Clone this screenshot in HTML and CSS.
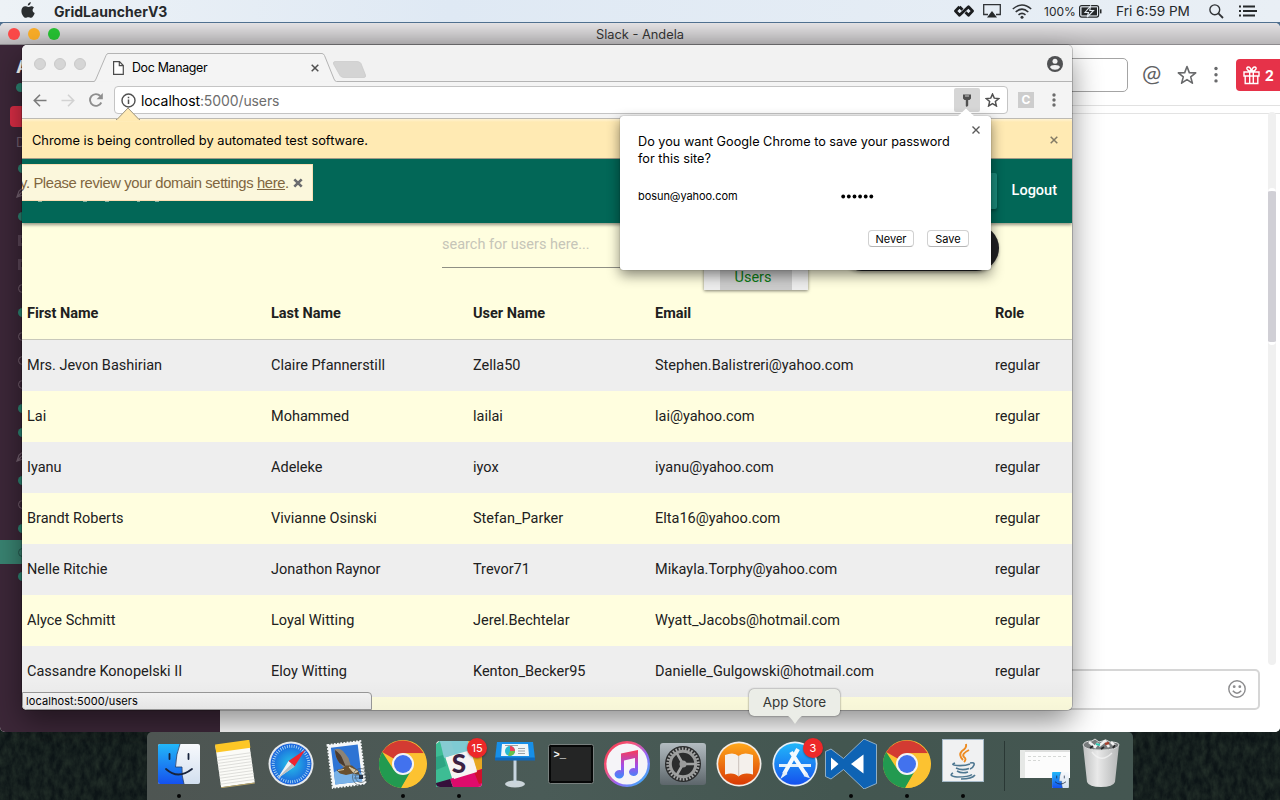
FILE: index.html
```html
<!DOCTYPE html>
<html lang="en">
<head>
<meta charset="utf-8">
<title>Doc Manager</title>
<link rel="stylesheet" href="styles.css">
</head>
<body>
<svg class="defs" width="0" height="0" aria-hidden="true">
  <defs>
    <linearGradient id="gBlue" x1="0" y1="0" x2="0" y2="1"><stop offset="0" stop-color="#22b7f8"/><stop offset="1" stop-color="#1551ee"/></linearGradient>
    <linearGradient id="gPale" x1="0" y1="0" x2="0" y2="1"><stop offset="0" stop-color="#f7f9fc"/><stop offset="1" stop-color="#d2dfef"/></linearGradient>
    <linearGradient id="gOrange" x1="0" y1="0" x2="0" y2="1"><stop offset="0" stop-color="#ffa81c"/><stop offset="1" stop-color="#d93a05"/></linearGradient>
    <linearGradient id="gNote" x1="0" y1="0" x2="0" y2="1"><stop offset="0" stop-color="#f83b55"/><stop offset=".55" stop-color="#a34be8"/><stop offset="1" stop-color="#3a8dfa"/></linearGradient>
    <linearGradient id="gRing" x1="0" y1="0" x2="1" y2="1"><stop offset="0" stop-color="#f2384f"/><stop offset=".35" stop-color="#f4557f"/><stop offset=".6" stop-color="#9a63f5"/><stop offset="1" stop-color="#23c0f8"/></linearGradient>
    <linearGradient id="gMetal" x1="0" y1="0" x2="0" y2="1"><stop offset="0" stop-color="#b3bcc1"/><stop offset="1" stop-color="#5d666b"/></linearGradient>
    <radialGradient id="gSafari"><stop offset="0" stop-color="#27c4e8"/><stop offset="1" stop-color="#1a62dc"/></radialGradient>
    <linearGradient id="gTrash" x1="0" y1="0" x2="1" y2="0"><stop offset="0" stop-color="#bfc1c1"/><stop offset=".4" stop-color="#e9e9e9"/><stop offset="1" stop-color="#b4b6b6"/></linearGradient>
    <symbol id="chrome" viewBox="0 0 48 48">
      <circle cx="24" cy="24" r="24" fill="#fcc231"/>
      <path d="M24 24 3.200 12A24 24 0 0 1 44.800 13.300H24z" fill="#d33b32"/>
      <path d="M3.200 12A24 24 0 0 0 22 48L33 29 24 24 14.500 29.500z" fill="#229a50"/>
      <path d="M24 13.300H45A24 24 0 0 1 22.500 48L33.500 29z" fill="#fcc231"/>
      <circle cx="24" cy="24" r="11" fill="#f4f4f4"/><circle cx="24" cy="24" r="9" fill="#4272ee"/>
    </symbol>
    <symbol id="finder" viewBox="0 0 42 40">
      <rect width="42" height="40" rx="2" fill="url(#gPale)"/>
      <path d="M2 0H22Q18 10 17.500 23H24Q23.500 32 26 40H2Q0 40 0 38V2Q0 0 2 0z" fill="url(#gBlue)"/>
      <path d="M22 0Q18 10 17.500 23H24Q23.500 32 26 40" fill="none" stroke="#223b66" stroke-width=".8"/>
      <path d="M8 25Q20 36 34 25M11.500 10V15M30.500 10V15" fill="none" stroke="#17233c" stroke-width="1.800" stroke-linecap="round"/>
    </symbol>
    <symbol id="pencil" viewBox="0 0 12 14"><path d="M1 12 3 6 8 2 11 5 7 10zM1 12 6 7" fill="none" stroke="currentColor" stroke-width="1.200"/></symbol>
  </defs>
</svg>

<svg class="wallpaper" width="1280" height="800">
  <filter id="forest" x="0" y="0" width="100%" height="100%" color-interpolation-filters="sRGB">
    <feTurbulence type="fractalNoise" baseFrequency=".16 .09" numOctaves="4" seed="8"/>
    <feColorMatrix values="0 0 0 0 .15  0 0 0 0 .2  0 0 0 0 .17  1.200 .5 0 0 -.5"/>
  </filter>
  <rect width="1280" height="800" fill="#0c1416"/>
  <rect y="720" width="1280" height="80" filter="url(#forest)"/>
</svg>

<header class="menubar">
  <svg class="apple" width="14" height="17" viewBox="0 0 14 17"><path d="M9.800 0c.1 1.800-1.300 3.400-3 3.500C6.600 1.800 8.200.2 9.800 0zM12.900 5.700C11 6.900 11.200 9.900 13.700 10.900 13 13 11.500 15.800 9.900 15.800c-1 0-1.400-.6-2.600-.6s-1.700.6-2.600.6C2.700 15.800.4 12 .4 8.900.4 6 2.200 4.300 4.200 4.300c1.200 0 2.100.7 3 .7.800 0 1.900-.8 3.300-.8 1 0 1.900.5 2.400 1.500z" fill="#2b2e30"/></svg>
  <strong class="appname">GridLauncherV3</strong>
  <div class="status">
    <svg width="20" height="12" viewBox="0 0 20 12"><path d="M5.500 1.800 1.500 6 5.500 10.200 14.500 1.800 18.500 6 14.500 10.200 11.500 7.300M5.500 1.800 8.500 4.700" fill="none" stroke="#1b1d1f" stroke-width="2.800" stroke-linejoin="round"/></svg>
    <svg class="airplay" width="18" height="14" viewBox="0 0 18 14"><path d="M5 10.500H.7V.7H17.300V10.500H13" fill="none" stroke="#303336" stroke-width="1.300"/><path d="M9 7 14 13.500H4z" fill="#26292b"/></svg>
    <svg class="wifi" width="20" height="15" viewBox="0 0 20 15"><path d="M.8 5Q10-3 19.200 5M3.700 8Q10 2.300 16.300 8M6.500 10.900Q10 7.800 13.500 10.900" fill="none" stroke="#303336" stroke-width="1.500"/><circle cx="10" cy="13.200" r="1.500" fill="#303336"/></svg>
    <span class="pct">100%</span>
    <svg class="battery" width="23" height="13" viewBox="0 0 23 13"><rect x=".6" y=".6" width="19" height="11.500" rx="2" fill="none" stroke="#26292b" stroke-width="1.200"/><rect x="2.500" y="2.400" width="15.500" height="8" fill="#26292b"/><path d="M11.500 1 6 7.500H9.500L8.200 12 14.500 5.500H10.800z" fill="#26292b" stroke="#e6edf4" stroke-width="1.100"/><path d="M21.700 4.300V8.400" stroke="#26292b" stroke-width="1.600"/></svg>
    <span class="clock">Fri 6:59 PM</span>
    <svg class="spot" width="15" height="15" viewBox="0 0 15 15"><circle cx="5.800" cy="5.800" r="4.900" fill="none" stroke="#303336" stroke-width="1.400"/><path d="M9.400 9.400 14 14" stroke="#303336" stroke-width="1.800"/></svg>
    <svg class="list" width="18" height="12" viewBox="0 0 18 12"><path d="M0 1.500H2M0 6H2M0 10.500H2M4 1.500H16M4 6H18M4 10.500H16" stroke="#26292b" stroke-width="1.900"/></svg>
  </div>
</header>

<section class="slack">
  <div class="slack-title"><i class="light red"></i><i class="light amber"></i><i class="light green"></i><span>Slack - Andela</span></div>
  <div class="slack-body">
    <aside class="side">
      <b class="team">A</b>
      <i class="dot first"></i>
      <i class="alert"></i>
      <span class="dm">D</span>
      <ul class="people">
        <li><i class="dot"></i></li>
        <li><svg width="12" height="14"><use href="#pencil"/></svg></li>
        <li><i class="dot"></i></li>
        <li><i class="box"></i></li>
        <li><i class="box"></i></li>
        <li><i class="ring"></i></li>
        <li><i class="dot"></i></li>
        <li><i class="ring"></i></li>
        <li><i class="ring"></i></li>
        <li><i class="ring"></i></li>
        <li><i class="dot"></i></li>
        <li><i class="dot"></i></li>
        <li><svg width="12" height="14"><use href="#pencil"/></svg></li>
        <li><i class="dot"></i></li>
        <li><i class="ring"></i></li>
        <li><i class="dot"></i></li>
        <li class="on"><i class="ring"></i></li>
        <li><i class="dot"></i></li>
      </ul>
    </aside>
    <main class="chat">
      <div class="chat-head">
        <div class="chat-search"></div>
        <span class="at">@</span>
        <svg class="star" width="20" height="20" viewBox="0 0 20 20"><path d="M10 1.500 12.300 7.600 18.700 7.900 13.700 11.900 15.400 18.200 10 14.600 4.600 18.200 6.300 11.900 1.300 7.900 7.700 7.600z" fill="none" stroke="#696a6c" stroke-width="1.600" stroke-linejoin="round"/></svg>
        <svg class="more" width="4" height="18" viewBox="0 0 4 18"><g fill="#696a6c"><circle cx="2" cy="2.500" r="1.700"/><circle cx="2" cy="8.700" r="1.700"/><circle cx="2" cy="14.900" r="1.700"/></g></svg>
        <div class="gift">
          <svg width="17" height="19" viewBox="0 0 17 19"><path d="M1 6H16V10H1zM2.200 10V17.500H14.800V10M6.700 6V17.500M10.300 6V17.500M8.500 5.500C3 5 3 1 5.200 1S8 3 8.500 5.500C9 3 9.700 1 11.800 1S14 5 8.500 5.500z" fill="none" stroke="#fff" stroke-width="1.400"/></svg>
          <b>2</b>
        </div>
      </div>
      <div class="messages"><div class="track"><i class="thumb"></i></div></div>
      <div class="composer">
        <svg width="18" height="18" viewBox="0 0 18 18"><circle cx="9" cy="9" r="8.200" fill="none" stroke="#8c8c8e" stroke-width="1.400"/><circle cx="6.200" cy="6.700" r="1.400" fill="#8c8c8e"/><circle cx="11.800" cy="6.700" r="1.400" fill="#8c8c8e"/><path d="M4.800 10.800Q9 15.500 13.200 10.800" fill="none" stroke="#8c8c8e" stroke-width="1.500"/></svg>
      </div>
    </main>
  </div>
</section>

<section class="browser">
  <div class="tabstrip">
    <svg class="tabshape" width="1050" height="37" viewBox="0 0 1050 37"><path d="M0 36.500H72Q73 36.500 74 34L84 10.500Q85 8.500 86 8.500H300Q301.500 8.500 302.500 10.500L312 34Q313 36.500 314.500 36.500H1050" fill="#f4f4f4" stroke="#b4b4b4"/><path d="M313 16.500H335Q338 16.500 339 18.500L343.500 30Q344 32.500 342 32.500H322Q319 32.500 318 30.500L311.500 19Q311 16.500 313 16.500z" fill="#d4d4d4" stroke="#c9c9c9" stroke-width=".7"/></svg>
    <div class="lights"><i></i><i></i><i></i></div>
    <div class="tab">
      <svg width="11" height="14" viewBox="0 0 11 14"><path d="M.6.6H6.500L10.300 4.500V13.300H.6zM6.300.8V4.700H10.200" fill="#fff" stroke="#4b4b4b" stroke-width="1.200"/></svg>
      <span class="tabname">Doc Manager</span>
      <svg class="x" width="8" height="8" viewBox="0 0 8 8"><path d="M.7.7 7.300 7.300M7.300.7.7 7.300" stroke="#4f4f4f" stroke-width="1.500"/></svg>
    </div>
    <svg class="profile" width="16" height="16" viewBox="0 0 16 16"><circle cx="8" cy="8" r="8" fill="#505153"/><circle cx="8" cy="5.200" r="2.500" fill="#f2f2f2"/><path d="M3 11.300Q3.500 9 8 9T13 11.300Q11.500 13.800 8 13.800T3 11.300z" fill="#f2f2f2"/></svg>
  </div>
  <div class="toolbar">
    <svg width="14" height="13" viewBox="0 0 14 13"><path d="M13.500 6.500H1.500M7 .8 1.300 6.500 7 12.200" fill="none" stroke="#7b7b7b" stroke-width="1.600"/></svg>
    <svg class="fwd" width="14" height="13" viewBox="0 0 14 13"><path d="M.5 6.500H12.500M7 .8 12.700 6.500 7 12.200" fill="none" stroke="#d2d2d2" stroke-width="1.600"/></svg>
    <svg class="reload" width="15" height="14" viewBox="0 0 15 14"><path d="M12.300 9.500A5.900 5.900 0 1 1 11.300 3" fill="none" stroke="#8e8e8e" stroke-width="1.900"/><path d="M13.800 0V6.200H7.600z" fill="#8e8e8e"/></svg>
    <div class="omnibox">
      <svg width="15" height="15" viewBox="0 0 15 15"><circle cx="7.500" cy="7.500" r="6.500" fill="none" stroke="#505050" stroke-width="1.400"/><path d="M7.500 6.500V11M7.500 3.800V5.300" stroke="#505050" stroke-width="1.500"/></svg>
      <span class="url">localhost<em>:5000/users</em></span>
      <span class="key"><svg width="10" height="13" viewBox="0 0 10 13"><path d="M1 .5H9V4.500L7.500 6H6.200V11.500L4.800 13 3.800 12V6H2.500L1 4.500z" fill="#505050"/><path d="M3 2H7" stroke="#ccc"/></svg></span>
      <svg class="fav" width="15" height="14" viewBox="0 0 20 19"><path d="M10 1.500 12.400 7 18.500 7.600 13.900 11.600 15.300 17.600 10 14.400 4.700 17.600 6.100 11.600 1.500 7.600 7.600 7z" fill="none" stroke="#505050" stroke-width="2"/></svg>
    </div>
    <b class="ext">C</b>
    <svg class="kebab" width="4" height="14" viewBox="0 0 4 14"><g fill="#6c6c6c"><circle cx="2" cy="2" r="1.700"/><circle cx="2" cy="7" r="1.700"/><circle cx="2" cy="12" r="1.700"/></g></svg>
  </div>
  <div class="infobar">
    <svg class="notch" width="24" height="14" viewBox="0 0 24 14"><path d="M0 12.800 12 1 24 12.800V14H0z" fill="#ffeab3"/><path d="M0 12.500H1L12 1 23 12.500H24" fill="none" stroke="#9c9583"/></svg>
    <span>Chrome is being controlled by automated test software.</span>
    <svg width="8" height="8" viewBox="0 0 8 8"><path d="M.7.7 7.300 7.300M7.300.7.7 7.300" stroke="#827a65" stroke-width="1.500"/></svg>
  </div>
  <div class="page">
    <nav class="nav">
      <i class="navbtn"></i>
      <a class="logout">Logout</a>
      <svg class="specks" width="150" height="3" viewBox="0 0 150 3"><path d="M16 .5H20M61 .5H65M83 .5H87M115 .5H118M133 .5H137" stroke="#7fb3a5"/></svg>
    </nav>
    <div class="notice"><span>y. Please review your domain settings <u>here</u>.</span><svg width="10" height="10" viewBox="0 0 10 10"><path d="M1.300 1.300 8.700 8.700M8.700 1.300 1.300 8.700" stroke="#6b6c6e" stroke-width="2.600"/></svg></div>
    <div class="tools">
      <div class="search">search for users here...</div>
      <div class="usertab"><span>Users</span></div>
      <i class="pill"></i>
    </div>
    <div class="table">
      <div class="row head"><span>First Name</span><span>Last Name</span><span>User Name</span><span>Email</span><span>Role</span></div>
      <div class="row"><span>Mrs. Jevon Bashirian</span><span>Claire Pfannerstill</span><span>Zella50</span><span>Stephen.Balistreri@yahoo.com</span><span>regular</span></div>
      <div class="row"><span>Lai</span><span>Mohammed</span><span>lailai</span><span>lai@yahoo.com</span><span>regular</span></div>
      <div class="row"><span>Iyanu</span><span>Adeleke</span><span>iyox</span><span>iyanu@yahoo.com</span><span>regular</span></div>
      <div class="row"><span>Brandt Roberts</span><span>Vivianne Osinski</span><span>Stefan_Parker</span><span>Elta16@yahoo.com</span><span>regular</span></div>
      <div class="row"><span>Nelle Ritchie</span><span>Jonathon Raynor</span><span>Trevor71</span><span>Mikayla.Torphy@yahoo.com</span><span>regular</span></div>
      <div class="row"><span>Alyce Schmitt</span><span>Loyal Witting</span><span>Jerel.Bechtelar</span><span>Wyatt_Jacobs@hotmail.com</span><span>regular</span></div>
      <div class="row"><span>Cassandre Konopelski II</span><span>Eloy Witting</span><span>Kenton_Becker95</span><span>Danielle_Gulgowski@hotmail.com</span><span>regular</span></div>
    </div>
    <div class="shade"></div>
    <div class="statusbar">localhost:5000/users</div>
  </div>
</section>

<section class="dialog">
  <svg class="tip" width="18" height="9" viewBox="0 0 18 9"><path d="M0 9 9 .5 18 9z" fill="#fff"/></svg>
  <svg class="close" width="8" height="8" viewBox="0 0 8 8"><path d="M.5.5 7.500 7.500M7.500.5.500 7.500" stroke="#5a5a5a" stroke-width="1.400"/></svg>
  <p>Do you want Google Chrome to save your password<br>for this site?</p>
  <div class="cred"><span>bosun@yahoo.com</span><svg width="33" height="5" viewBox="0 0 33 5"><g fill="#000"><circle cx="2.200" cy="2.500" r="1.900"/><circle cx="7.800" cy="2.500" r="1.900"/><circle cx="13.500" cy="2.500" r="1.900"/><circle cx="19.100" cy="2.500" r="1.900"/><circle cx="24.700" cy="2.500" r="1.900"/><circle cx="30.300" cy="2.500" r="1.900"/></g></svg></div>
  <div class="actions"><span class="btn never">Never</span><span class="btn save">Save</span></div>
</section>

<footer class="dock">
  <div class="slot run"><svg width="42" height="40"><use href="#finder"/></svg></div>
  <div class="slot"><svg width="42" height="48" viewBox="0 0 42 48"><g transform="rotate(-8 21 24)"><rect x="4" y="3" width="34" height="42" fill="#fbfbf7"/><path d="M4 15H38M4 18H38M4 21H38M4 24H38M4 27H38M4 30H38M4 33H38M4 36H38M4 39H38M4 42H38" stroke="#d8d8d4" stroke-width=".8"/><rect x="4" y="2" width="34.500" height="8" fill="#fdc726"/><path d="M4 45.500H38" stroke="#bda86a"/></g></svg></div>
  <div class="slot"><svg width="46" height="46" viewBox="0 0 46 46"><circle cx="23" cy="23" r="22.500" fill="#e6e9eb"/><circle cx="23" cy="23" r="20.500" fill="url(#gSafari)"/><circle cx="23" cy="23" r="17.800" fill="none" stroke="#b6def7" stroke-width="3" stroke-dasharray=".8 1.530"/><path d="M37.500 8.500 26.500 25.500 20.500 20z" fill="#ee2430"/><path d="M9.500 37.500 20.500 20 26.500 25.500z" fill="#f1f1f1"/><path d="M9.500 37.500 23.500 22.800 26.500 25.500z" fill="#b9bfc2"/></svg></div>
  <div class="slot"><svg width="46" height="50" viewBox="0 0 46 50"><g transform="rotate(-7 22 25)"><rect x="6" y="4" width="33" height="43" fill="#f5f7f8" stroke="#f5f7f8" stroke-width="2" stroke-dasharray="1.800 1.400"/><rect x="9" y="7" width="27" height="37" fill="#2e74d4"/><path d="M9 32Q20 25 36 36V44H9z" fill="#79b2e8"/></g><path d="M10.500 10.500Q15 8.500 19 12L24.500 19 27 27.500 21 30 15.500 24Q11 18 10.500 10.500z" fill="#8d8273"/><path d="M11 11Q17 15 19 21L22 28 15.500 24Q11 18 11 11z" fill="#4b3b2f"/><path d="M12.500 31Q19 30 22 26.500L28 26.500 34 31.500 36 36 29 34.500 22 36 16 34.500z" fill="#69502f"/><path d="M25 28 34 32.500 30 34zM14 31.500 20 30.500" fill="#d6c6a4" stroke="#d6c6a4"/><g fill="none" stroke="#3b4850" stroke-width="1" opacity=".6"><circle cx="37" cy="38" r="8.500"/><circle cx="37" cy="38" r="5.500"/><path d="M30 36H45M30 39H45"/></g><rect x="35" y="36" width="4" height="4" fill="#26354b"/></svg></div>
  <div class="slot run"><svg width="48" height="48"><use href="#chrome"/></svg></div>
  <div class="slot run"><svg width="46" height="46" viewBox="0 0 46 46"><rect width="46" height="46" rx="4" fill="#f5f3f1"/><path d="M4 0H32L35 9 7 17 2 2z" fill="#7fcbd3"/><path d="M0 3 4 0 17 40 0 46z" fill="#3dbd94"/><path d="M4 0H15L19 13 8 17z" fill="#86cbd2"/><path d="M0 16 7 14 10 25 0 29z" fill="#2da583"/><path d="M32 0H42Q46 0 46 4V28L41 30z" fill="#e8a820"/><path d="M14 38 46 28V42Q46 46 42 46H17z" fill="#df0b6c"/><path d="M38 31 46 28V42L43 43z" fill="#cf102c"/><path d="M0 42 14 38 17 46H4Q0 46 0 42z" fill="#36103b"/><path d="M10 17 34 10 41 31 18 38z" fill="#f7f4f3"/><text x="23" y="32" class="slack-s">S</text></svg><b class="badge slackb">15</b></div>
  <div class="slot"><svg width="42" height="48" viewBox="0 0 42 48"><ellipse cx="21" cy="44" rx="10" ry="3.500" fill="#cbd5da"/><path d="M19.500 18H22.500V43H19.500z" fill="#c7d5df"/><path d="M3 2H39L41 19H1z" fill="#178fe8"/><path d="M1 17.500H41V20.500H1z" fill="#0f68bb"/><path d="M8 4H34L35 16H7z" fill="#f0f6f8"/><circle cx="16" cy="11" r="5" fill="#28b9cf"/><path d="M16 11V6A5 5 0 0 1 21 11z" fill="#ed415b"/><path d="M16 11H21A5 5 0 0 1 14 15.500z" fill="#6cc047"/><path d="M11 5.500H24M24 8.500H31M24 11H31M24 13.500H31" stroke="#9aa0a5"/></svg></div>
  <div class="slot"><svg width="46" height="40" viewBox="0 0 46 40"><rect x=".5" y=".5" width="45" height="39" rx="2" fill="#060707" stroke="#78807e"/><rect x="3" y="3" width="40" height="34" fill="#242525"/><text x="5.500" y="14" class="prompt">&gt;_</text></svg></div>
  <div class="slot"><svg width="46" height="46" viewBox="0 0 46 46"><circle cx="23" cy="23" r="21.800" fill="#f5f4f8" stroke="url(#gRing)" stroke-width="2.400"/><path d="M17 12.500 34 9V30.500A4.500 4 0 1 1 31 27.200V17L20 19.500V33A4.700 4.200 0 1 1 17 29.300z" fill="url(#gNote)"/></svg></div>
  <div class="slot"><svg width="46" height="42" viewBox="0 0 46 42"><rect width="46" height="42" rx="3" fill="url(#gMetal)"/><circle cx="23" cy="21" r="18" fill="#2b2c2d"/><circle cx="23" cy="21" r="15.200" fill="none" stroke="#a6a7a7" stroke-width="3" stroke-dasharray="1.700 1.480"/><circle cx="23" cy="21" r="12.700" fill="none" stroke="#9c9d9d" stroke-width="3"/><path d="M23 21H36M23 21 16.500 9.700M23 21 16.500 32.300" stroke="#a2a3a3" stroke-width="2.600"/><circle cx="23" cy="21" r="3.500" fill="#9a9b9b"/></svg></div>
  <div class="slot"><svg width="46" height="46" viewBox="0 0 46 46"><circle cx="23" cy="23" r="22.500" fill="#f0ebe7"/><circle cx="23" cy="23" r="20.800" fill="url(#gOrange)"/><path d="M9 14Q18 10.500 22.500 15 27.500 10.500 37 14V33.500Q27.500 31 22.500 35.500 18 31 9 33.500z" fill="#f4f0ec"/><path d="M22.700 15V35" stroke="#c9c1bb"/></svg></div>
  <div class="slot"><svg width="46" height="46" viewBox="0 0 46 46"><circle cx="23" cy="23" r="22.500" fill="#e8eff6"/><circle cx="23" cy="23" r="20.800" fill="url(#gBlue)"/><path d="M7 24.500H39" stroke="#e3f1fb" stroke-width="3"/><path d="M26 8 12 33M19 11 34 34" stroke="#f4fafe" stroke-width="4"/><path d="M12.500 30 10 36 15 32.500M32 34.500 36.500 36 34 31" fill="#e6eff7" stroke="#e6eff7" stroke-width="1.500"/></svg><b class="badge">3</b><span class="tooltip">App Store<svg width="18" height="10" viewBox="0 0 18 10"><path d="M0 0H18Q14 1 9 9 4 1 0 0z" fill="#ebede7"/></svg></span></div>
  <div class="slot run"><svg width="52" height="50" viewBox="0 0 52 50"><path d="M39 0 51.500 5.500V44.500L39 50 18.500 30.500 6 40 .5 37.500V12.500L6 10 18.500 19.500z" fill="#0e63b4" stroke="#a9c3d6" stroke-width=".8"/><path d="M6 18.500V31.500L13.500 25zM38.500 15.500V34.500L26 25z" fill="#fff"/></svg></div>
  <div class="slot run"><svg width="48" height="48"><use href="#chrome"/></svg></div>
  <div class="slot run java"><svg width="42" height="43" viewBox="0 0 42 43"><rect x=".5" y=".5" width="41" height="42" fill="#f0f1f2" stroke="#a6bac8"/><path d="M24 5Q25 9 20 12 16 16 21 21M27 11Q19 15 22 18 25 20 22 23" fill="none" stroke="#ee8b20" stroke-width="1.900"/><path d="M13 24Q8 26 15 26.500 23 27 28 25M14 29Q20 32 27 29.500M15 32Q20 35 26 33M28 24Q33 23 32 26 31 29 28 30M11 34Q6 37 15 38 27 38 30 35.500M33 36Q30 40 19 40" fill="none" stroke="#4e7791" stroke-width="1.600"/></svg></div>
  <i class="sep"></i>
  <div class="slot mini"><svg width="50" height="38" viewBox="0 0 50 38"><rect width="50" height="28" fill="#fcfcfc"/><rect width="50" height="2" fill="#dedfde"/><rect width="5" height="28" fill="#e6e8e6"/><path d="M8 6.500H47M8 10.500H20" stroke="#d6d8d6" stroke-dasharray="3 2"/><svg x="32" y="22" width="17" height="16"><use href="#finder"/></svg></svg></div>
  <div class="slot trash"><svg width="40" height="50" viewBox="0 0 40 50"><path d="M2 7Q20 14 38 7L34 44Q32 49 20 49T6 44z" fill="url(#gTrash)"/><path d="M2 7Q3 3 11 3L14 1 18 4 25 2 29 4Q38 4 38 7 37 12 20 12T2 7z" fill="#777b7c" stroke="#d8dada"/><path d="M8 4 14 9 17 5M18 8 24 3 28 9M30 4 34 8" stroke="#f2f2f2" stroke-width="2.500" fill="none"/><path d="M15 6 19 7" stroke="#2cc7b0" stroke-width="2"/><path d="M24 6 28 5" stroke="#a4402e" stroke-width="2.500"/><path d="M9 10 12 8M20 11 23 9M32 10 34 7" stroke="#252728" stroke-width="2"/><path d="M11 14Q20 26 31 15" fill="none" stroke="#f5f5f5" stroke-width="1.500" opacity=".7"/></svg></div>
</footer>
</body>
</html>
```
FILE: styles.css
```css
* { box-sizing: border-box; }
html, body { margin: 0; width: 1280px; height: 800px; overflow: hidden; }
body { position: relative; font-family: Inter, "Liberation Sans", sans-serif; font-size: 13px; background: #10191a; color: #000; }
svg { display: block; flex: none; }
i, em { font-style: normal; }
i { display: block; flex: none; }
span { white-space: nowrap; }
.defs, .wallpaper { position: absolute; left: 0; top: 0; }

/* System menu bar */
.menubar { position: absolute; left: 0; top: 0; width: 1280px; height: 22px; display: flex; align-items: center; padding-left: 21px; background: linear-gradient(90deg, #edf2f6, #dfe9f4 35%, #e9eff5); color: #26292b; }
.menubar::after { content: ""; position: absolute; left: 0; top: 22px; width: 100%; height: 10px; background: #50708f; }
.apple { margin-top: -2px; }
.appname { margin-left: 19px; font-size: 14px; font-weight: 700; letter-spacing: .04px; }
.status { margin-left: auto; height: 22px; display: flex; align-items: center; padding-right: 23px; }
.airplay { margin-left: 9px; }
.wifi { margin-left: 11px; }
.pct { margin-left: 12px; width: 35px; font-size: 12px; }
.clock { margin-left: 14px; width: 76px; font-size: 13.600px; }
.spot { margin-left: 17px; }
.list { margin-left: 15px; }

/* Chat window */
.slack { position: absolute; left: 0; top: 23px; width: 1280px; height: 709px; border-radius: 5px; overflow: hidden; background: #fff; }
.slack-title { height: 22px; display: flex; align-items: center; gap: 8px; padding-left: 8px; background: linear-gradient(#e3e1e3, #b9b7b9); border-bottom: 1px solid #8d8b8e; position: relative; }
.slack-title span { position: absolute; left: 0; top: 4px; width: 100%; text-align: center; color: #333; font-size: 12.800px; }
.light { width: 12px; height: 12px; border-radius: 50%; }
.red { background: #fb4948; } .amber { background: #f8ac27; } .green { background: #26bf32; }
.slack-body { display: flex; height: 687px; }
.side { width: 220px; background: #3c2738; overflow: hidden; color: #746170; }
.team { display: block; margin: 12px 0 0 16px; height: 20px; line-height: 20px; color: #fff; font-size: 18px; }
.dot { width: 9px; height: 9px; margin-left: 1px; border-radius: 50%; background: #2c8573; }
.dot.first { margin: 6px 0 0 16px; }
.alert { margin: 14px 0 0 10px; width: 180px; height: 21px; border-radius: 4px; background: #da2d45; }
.dm { display: block; margin: 8px 0 0 16px; height: 14px; line-height: 14px; }
.people { list-style: none; margin: 7px 0 0; padding: 0; }
.people li { height: 24px; padding-left: 17px; display: flex; align-items: center; }
.people li svg { margin-left: -1px; }
.ring { width: 9px; height: 9px; margin-left: 1px; border: 1px solid #756170; border-radius: 50%; }
.box { width: 10px; height: 11px; margin-left: 1px; border: 3px solid #5b4657; }
.people .on { background: #398371; }
.on .ring { border-color: #25584e; }
.chat { flex: 1; background: #fff; }
.chat-head { height: 61px; display: flex; align-items: center; border-bottom: 1px solid #e1e1e1; }
.chat-search { width: 908px; height: 34px; border: 1px solid #a4a4a4; border-radius: 5px; }
.at { margin: -5px 0 0 14px; width: 22px; color: #616264; font-family: Lato, sans-serif; font-size: 23px; line-height: 26px; }
.star { margin-left: 13px; }
.more { margin-left: 17px; }
.gift { margin-left: 18px; width: 44px; height: 32px; padding-left: 7px; display: flex; align-items: center; gap: 5px; border-radius: 4px 0 0 4px; background: #e63249; color: #fff; font: bold 15px Lato, sans-serif; }
.messages { height: 560px; margin-top: 7px; padding-right: 4px; border-top: 1px solid #e3e3e3; display: flex; justify-content: flex-end; }
.track { width: 8px; height: 553px; margin-top: -2px; padding-top: 76px; border-radius: 4px; background: #f0f0f0; }
.thumb { width: 8px; height: 157px; border: solid #fff; border-width: 3px 0; border-radius: 4px; background: #d0cfd5; }
.composer { width: 1040px; height: 41px; margin-top: -4px; padding: 0 12px 2px 0; display: flex; align-items: center; justify-content: flex-end; border: 2px solid #d6d6d6; border-radius: 5px; }

/* Browser window */
.browser { position: absolute; left: 22px; top: 45px; width: 1050px; height: 665px; border-radius: 5px; background: #f2f2f2; box-shadow: 0 0 0 1px rgba(0,0,0,.2), 0 12px 30px rgba(0,0,0,.45); }
.tabstrip { position: relative; height: 37px; display: flex; align-items: center; border-radius: 5px 5px 0 0; background: #f2f2f2; }
.tabshape { position: absolute; left: 0; top: 0; }
.lights { position: relative; display: flex; gap: 8px; padding-left: 12px; }
.lights i { width: 12px; height: 12px; border-radius: 50%; background: #d5d5d5; border: 1px solid #c9c9c9; }
.tab { position: relative; margin: 9px 0 0 27px; width: 206px; display: flex; align-items: center; }
.tabname { margin-left: 8px; font-size: 12.400px; line-height: 16px; letter-spacing: -.32px; }
.x { margin-left: auto; }
.profile { position: relative; margin: 1px 9px 0 auto; }
.toolbar { height: 37px; padding-left: 11px; display: flex; align-items: center; background: #f4f4f4; border-bottom: 1px solid #bdbab3; }
.fwd { margin-left: 14px; }
.reload { margin-left: 14px; }
.omnibox { margin-left: 10px; width: 894px; height: 28px; padding-left: 6px; display: flex; align-items: center; background: #fff; border: 1px solid #c4c4c4; border-radius: 4px; }
.url { margin-left: 5px; font-size: 14px; letter-spacing: -.1px; }
.url em { color: #6d6d6d; }
.key { margin-left: auto; width: 26px; height: 24px; display: flex; align-items: center; justify-content: center; background: #d6d6d6; border-radius: 2px; }
.fav { margin: 0 7px 0 5px; }
.ext { margin-left: 10px; width: 16px; height: 16px; background: #cdcdcd; color: #fff; text-align: center; font-size: 12px; line-height: 16px; }
.kebab { margin-left: 18px; }
.infobar { position: relative; height: 40px; padding: 3px 14px 0 10px; display: flex; align-items: center; justify-content: space-between; background: linear-gradient(#fff3d3, #ffeab3 3px); border-bottom: 1px solid #a19b87; font-size: 12.830px; }
.notch { position: absolute; left: 94px; top: -12px; }
.page { position: relative; z-index: 0; height: 551px; overflow: hidden; border-radius: 0 0 5px 5px; background: #fffedf; font: 15px Roboto, sans-serif; color: #202020; }
.nav { position: relative; height: 64px; display: flex; align-items: center; justify-content: flex-end; padding-right: 15px; background: #026757; box-shadow: 0 2px 3px rgba(0,0,0,.4); color: #fff; z-index: 1; }
.navbtn { width: 80px; height: 36px; margin-right: 15px; border-radius: 2px; background: #1c8b7b; box-shadow: 0 2px 3px rgba(0,0,0,.3); }
.logout { margin-top: -1px; font-size: 14.500px; font-weight: 500; }
.specks { position: absolute; left: 0; top: 42px; }
.notice { position: absolute; z-index: 2; left: -1px; top: 5px; width: 292px; height: 37px; display: flex; align-items: center; gap: 4px; background: #fbf7dc; border: 1px solid #fbdfb5; color: #806640; font: 14.800px "Liberation Sans", sans-serif; letter-spacing: -.38px; }
.notice span { margin-left: -2px; }
.tools { position: relative; height: 64px; padding-left: 420px; }
.search { width: 240px; height: 45px; padding-top: 13px; border-bottom: 1px solid #8f8f84; color: #c6c5b8; font-size: 14.500px; line-height: 18px; }
.usertab { position: absolute; left: 682px; top: 27px; width: 104px; height: 40px; display: flex; justify-content: center; background: #ececec; box-shadow: 0 1px 3px rgba(0,0,0,.5); }
.usertab span { width: 72px; height: 40px; padding: 16px 6px 0 0; line-height: 24px; text-align: center; font-size: 14.500px; color: #0b7a16; background: #cbcbcb; }
.pill { position: absolute; left: 817px; top: 2px; width: 160px; height: 46px; border-radius: 23px; background: #202124; box-shadow: 0 2px 3px rgba(0,0,0,.3); }
.row { height: 51px; display: grid; grid-template-columns: 244px 202px 182px 340px auto; align-items: center; padding-left: 5px; background: #fffedf; font-size: 14.500px; }
.row:nth-child(even) { background: #eee; }
.head { height: 53px; border-bottom: 1px solid #c8c8bb; font-weight: 700; }
.shade { position: absolute; left: 0; bottom: 0; width: 100%; height: 30px; background: linear-gradient(rgba(0,0,0,0), rgba(0,0,0,.035)); }
.statusbar { position: absolute; left: 0; bottom: 0; width: 350px; height: 18px; padding-left: 3px; border: 1px solid #969696; border-radius: 0 4px 0 3px; background: linear-gradient(#f1f1f1, #e5e5e5); color: #000; font: 11px/17px Inter, sans-serif; letter-spacing: .08px; }

/* Password prompt */
.dialog { position: absolute; z-index: 1; left: 620px; top: 116px; width: 371px; height: 154px; padding: 17px 22px 0 18px; background: #fff; border-radius: 3px; box-shadow: 0 0 1px rgba(0,0,0,.6), 0 5px 13px rgba(0,0,0,.48); }
.tip { position: absolute; left: 337px; top: -8px; }
.close { position: absolute; left: 352px; top: 10px; }
.dialog p { margin: 0; font-size: 12.700px; line-height: 17px; white-space: nowrap; }
.cred { margin-top: 21px; height: 16px; display: flex; align-items: center; font-size: 11px; letter-spacing: -.06px; }
.cred span { width: 203px; }
.actions { margin-top: 26px; display: flex; justify-content: flex-end; gap: 13px; }
.btn { height: 17px; line-height: 16px; text-align: center; font-size: 11px; border: 1px solid #d1d1d1; border-bottom-color: #b4b4b4; border-radius: 4px; }
.never { width: 46px; } .save { width: 42px; }

/* Dock */
.dock { position: absolute; left: 147px; top: 732px; width: 986px; height: 68px; padding: 0 4px; display: flex; border-radius: 5px 5px 0 0; background: linear-gradient(90deg, #4e5552, #4a5b57 40%, #435650 70%, #445651); }
.slot { position: relative; width: 56px; height: 64px; display: flex; align-items: center; justify-content: center; }
.run::after { content: ""; position: absolute; left: 26px; top: 62px; width: 4px; height: 4px; border-radius: 50%; background: #050606; }
.java { padding-bottom: 8px; }
.sep { width: 1px; height: 50px; margin: 9px 12px 0 13px; background: #2a3835; }
.mini { padding-top: 9px; }
.trash { padding-bottom: 2px; }
.badge { position: absolute; right: 0; top: 6px; width: 20px; height: 20px; border-radius: 50%; background: #ed2829; color: #fff; text-align: center; font: 11px/20px Inter, sans-serif; box-shadow: 0 1px 2px rgba(0,0,0,.35); }
.slack-s { font: 900 26px Lato, sans-serif; text-anchor: middle; fill: #3c2142; }
.prompt { font: bold 10.500px "Liberation Mono", monospace; fill: #f5f5f5; }
.tooltip { position: absolute; left: -18px; top: -43px; width: 91px; height: 27px; text-align: center; font-size: 13.500px; line-height: 26px; color: #353735; background: #ebede7; border-radius: 5px; box-shadow: 0 0 2px rgba(0,0,0,.6); }
.tooltip svg { position: absolute; left: 37px; top: 26px; }
```
